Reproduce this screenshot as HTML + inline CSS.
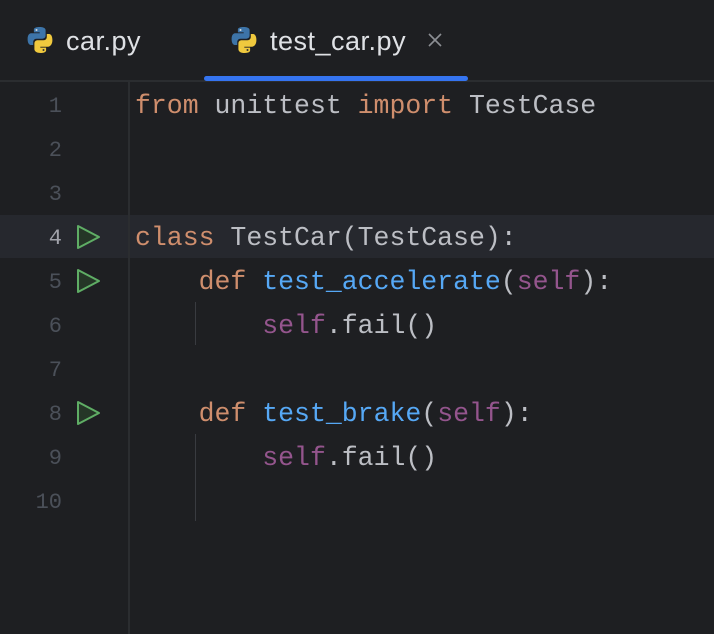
<!DOCTYPE html>
<html><head><style>
body{margin:0;width:714px;height:634px;background:#1e1f22;overflow:hidden;position:relative;font-family:"Liberation Sans",sans-serif}
.tabs{position:absolute;left:0;top:0;width:714px;height:80px;border-bottom:2px solid #2b2d30;box-sizing:content-box}
.tab{position:absolute;top:26px;font-size:27px;letter-spacing:0.5px;color:#dfe1e5}
.ul{position:absolute;left:204px;top:76px;width:264px;height:5px;background:#3574f0;border-radius:3px}
.gsep{position:absolute;left:128px;top:82px;width:2px;height:552px;background:#2b2d30}
.hl{position:absolute;left:0;top:215px;width:714px;height:43px;background:#26282e}
.ln{position:absolute;width:62px;text-align:right;font-family:"Liberation Mono",monospace;font-size:22px;color:#4b5059}
.code{position:absolute;left:135px;font-family:"Liberation Mono",monospace;font-size:26.5px;color:#bcbec4;white-space:pre}
.k{color:#cf8e6d}.f{color:#56a8f5}.s{color:#94558d}
.guide{position:absolute;left:195px;width:1px;background:#393b40}
.run{position:absolute;left:76px}
</style></head><body>
<div class="tabs"></div>
<svg style="position:absolute;left:26px;top:26px" width="28" height="28" viewBox="0 0 28 28"><path d="M13.5 1c-6 0-5.6 2.6-5.6 2.6v2.8h5.8v.9H5.6S1.6 6.8 1.6 13s3.4 6 3.4 6h2.2v-2.9s-.1-3.4 3.4-3.4h5.7s3.3 0 3.3-3.2V4.2S20 1 13.5 1z" fill="#3d74a8"/><path d="M14.5 27c6 0 5.6-2.6 5.6-2.6v-2.8h-5.8v-.9h8.1s4-.5 4-6.7-3.4-6-3.4-6h-2.2v2.9s.1 3.4-3.4 3.4h-5.7s-3.3 0-3.3 3.2v5.3S8 27 14.5 27z" fill="#f0c93e"/><circle cx="10.5" cy="4" r="1" fill="#ddd"/><circle cx="17.5" cy="24" r="1" fill="#333"/></svg>
<div class="tab" style="left:66px">car.py</div>
<svg style="position:absolute;left:230px;top:26px" width="28" height="28" viewBox="0 0 28 28"><path d="M13.5 1c-6 0-5.6 2.6-5.6 2.6v2.8h5.8v.9H5.6S1.6 6.8 1.6 13s3.4 6 3.4 6h2.2v-2.9s-.1-3.4 3.4-3.4h5.7s3.3 0 3.3-3.2V4.2S20 1 13.5 1z" fill="#3d74a8"/><path d="M14.5 27c6 0 5.6-2.6 5.6-2.6v-2.8h-5.8v-.9h8.1s4-.5 4-6.7-3.4-6-3.4-6h-2.2v2.9s.1 3.4-3.4 3.4h-5.7s-3.3 0-3.3 3.2v5.3S8 27 14.5 27z" fill="#f0c93e"/><circle cx="10.5" cy="4" r="1" fill="#ddd"/><circle cx="17.5" cy="24" r="1" fill="#333"/></svg>
<div class="tab" style="left:270px">test_car.py</div>
<svg style="position:absolute;left:428px;top:33px" width="14" height="14"><path d="M1 1L13 13M13 1L1 13" stroke="#8c8f94" stroke-width="1.6"/></svg>
<div class="ul"></div>
<div class="hl"></div>
<div class="gsep"></div>
<div class="ln" style="top:94px">1</div>
<div class="ln" style="top:138px">2</div>
<div class="ln" style="top:182px">3</div>
<div class="ln" style="top:226px;color:#a1a3ab">4</div>
<div class="ln" style="top:270px">5</div>
<div class="ln" style="top:314px">6</div>
<div class="ln" style="top:358px">7</div>
<div class="ln" style="top:402px">8</div>
<div class="ln" style="top:446px">9</div>
<div class="ln" style="top:490px">10</div>
<svg class="run" style="top:224px" width="26" height="26"><path d="M2 2L23 13L2 24Z" fill="#253627" stroke="#5fad65" stroke-width="2" stroke-linejoin="round"/></svg>
<svg class="run" style="top:268px" width="26" height="26"><path d="M2 2L23 13L2 24Z" fill="#253627" stroke="#5fad65" stroke-width="2" stroke-linejoin="round"/></svg>
<svg class="run" style="top:400px" width="26" height="26"><path d="M2 2L23 13L2 24Z" fill="#253627" stroke="#5fad65" stroke-width="2" stroke-linejoin="round"/></svg>
<div class="guide" style="top:302px;height:43px"></div>
<div class="guide" style="top:434px;height:87px"></div>
<div class="code" style="top:91px"><span class="k">from</span> unittest <span class="k">import</span> TestCase</div>
<div class="code" style="top:223px"><span class="k">class</span> TestCar(TestCase):</div>
<div class="code" style="top:267px">    <span class="k">def</span> <span class="f">test_accelerate</span>(<span class="s">self</span>):</div>
<div class="code" style="top:311px">        <span class="s">self</span>.fail()</div>
<div class="code" style="top:399px">    <span class="k">def</span> <span class="f">test_brake</span>(<span class="s">self</span>):</div>
<div class="code" style="top:443px">        <span class="s">self</span>.fail()</div>
</body></html>
